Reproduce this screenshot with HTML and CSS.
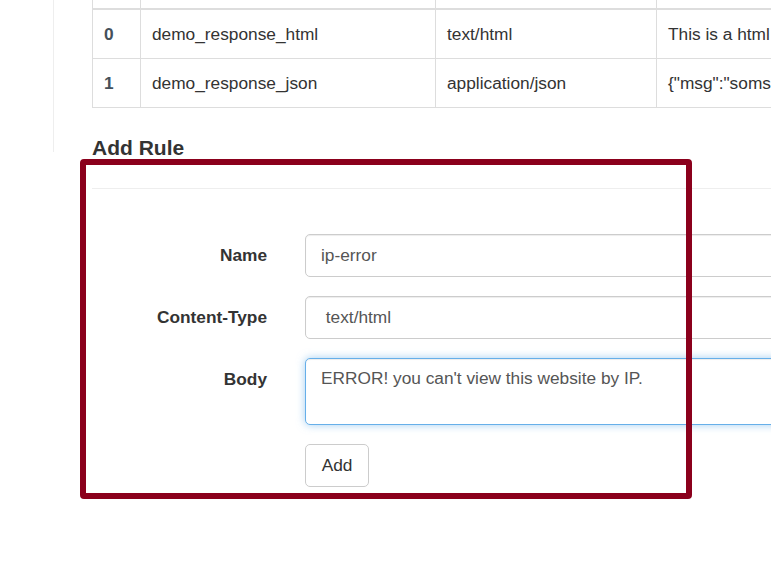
FILE: index.html
```html
<!DOCTYPE html>
<html>
<head>
<meta charset="utf-8">
<link rel="stylesheet" href="styles.css">
</head>
<body>
<div class="page">
  <div class="side"></div>
  <div class="main">
    <table class="rules">
      <colgroup>
        <col class="c-id"><col class="c-name"><col class="c-type"><col class="c-body">
      </colgroup>
      <thead>
        <tr><th>&nbsp;</th><th>&nbsp;</th><th>&nbsp;</th><th>&nbsp;</th></tr>
      </thead>
      <tbody>
        <tr><th class="idx">0</th><td>demo_response_html</td><td>text/html</td><td>This is a html response page</td></tr>
        <tr><th class="idx">1</th><td>demo_response_json</td><td>application/json</td><td>{"msg":"somsing wrong"}</td></tr>
      </tbody>
    </table>

    <h4 class="title">Add Rule</h4>
    <hr class="sep">

    <form class="form">
      <label class="lbl">Name</label>
      <input class="ctl" type="text" value="ip-error">
      <label class="lbl">Content-Type</label>
      <input class="ctl" type="text" value=" text/html">
      <label class="lbl">Body</label>
      <textarea class="ctl area">ERROR! you can't view this website by IP.</textarea>
      <span></span>
      <div><button type="button" class="btn">Add</button></div>
    </form>
  </div>
</div>
<div class="highlight"></div>
</body>
</html>
```
FILE: styles.css
```css
html, body {
  margin: 0;
  padding: 0;
  background: #fff;
  overflow: hidden;
  width: 771px;
  height: 575px;
}
body {
  font-family: "Liberation Sans", Arial, sans-serif;
  font-size: 17.3px;
  color: #333;
  position: relative;
}
.page {
  display: flex;
  align-items: flex-start;
  width: 1100px;
}
.side {
  width: 53px;
  height: 152px;
  border-right: 1px solid #eee;
  flex: none;
}
.main {
  padding-left: 38px;
  width: 960px;
}
.rules {
  border-collapse: collapse;
  table-layout: fixed;
  width: 900px;
  margin-top: -41px;
  border: 1px solid #ddd;
}
.c-id { width: 48px; }
.c-name { width: 295px; }
.c-type { width: 221px; }
.rules th, .rules td {
  padding: 11px 11px;
  line-height: 26px;
  border: 1px solid #ddd;
  text-align: left;
  white-space: nowrap;
  overflow: hidden;
  font-weight: normal;
}
.rules thead th {
  border-bottom: 2px solid #ddd;
}
.rules th.idx {
  font-weight: bold;
  color: #45505a;
}
.title {
  margin: 28px 0 0;
  font-size: 21px;
  line-height: 23px;
  font-weight: bold;
  color: #333;
}
.sep {
  margin: 29px 0 0;
  border: 0;
  border-top: 1px solid #eee;
  height: 0;
}
.form {
  margin-top: 45px;
  display: grid;
  grid-template-columns: 175px 600px;
  column-gap: 38px;
  row-gap: 19px;
  align-items: start;
}
.lbl {
  text-align: right;
  font-weight: bold;
  line-height: 43px;
  color: #333;
}
.ctl {
  box-sizing: border-box;
  height: 43px;
  width: 100%;
  border: 1px solid #ccc;
  border-radius: 5px;
  padding: 0 15px;
  font-family: "Liberation Sans", Arial, sans-serif;
  font-size: 17.3px;
  color: #555;
  background: #fff;
  box-shadow: inset 0 1px 1px rgba(0,0,0,.075);
  margin: 0;
  outline: none;
}
.area {
  height: 67px;
  padding: 7px 15px;
  line-height: 25px;
  resize: none;
  border-color: #66afe9;
  box-shadow: inset 0 1px 1px rgba(0,0,0,.075), 0 0 8px rgba(102,175,233,.6);
}
.btn {
  box-sizing: border-box;
  width: 64px;
  height: 43px;
  border: 1px solid #ccc;
  border-radius: 5px;
  background: #fff;
  color: #333;
  font-family: "Liberation Sans", Arial, sans-serif;
  font-size: 17.3px;
  padding: 0;
  margin: 0;
}
.highlight {
  position: absolute;
  left: 80px;
  top: 159px;
  width: 612px;
  height: 340px;
  box-sizing: border-box;
  border: 6px solid #8b001c;
  border-radius: 4px;
  pointer-events: none;
}
```
